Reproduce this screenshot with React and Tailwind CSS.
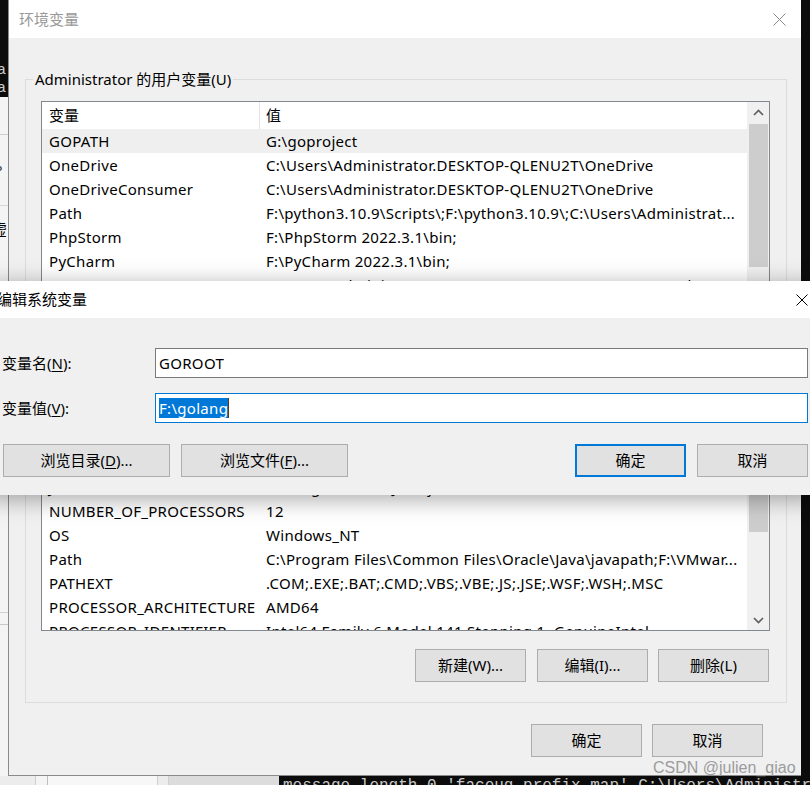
const userRows = [
  ["GOPATH", "G:\\goproject"],
  ["OneDrive", "C:\\Users\\Administrator.DESKTOP-QLENU2T\\OneDrive"],
  ["OneDriveConsumer", "C:\\Users\\Administrator.DESKTOP-QLENU2T\\OneDrive"],
  ["Path", "F:\\python3.10.9\\Scripts\\;F:\\python3.10.9\\;C:\\Users\\Administrat..."],
  ["PhpStorm", "F:\\PhpStorm 2022.3.1\\bin;"],
  ["PyCharm", "F:\\PyCharm 2022.3.1\\bin;"],
  ["TEMP", "C:\\Users\\Administrator.DESKTOP-QLENU2T\\AppData\\Local\\Temp"],
  ["TMP", "C:\\Users\\Administrator.DESKTOP-QLENU2T\\AppData\\Local\\Temp"],
];

const sysRows = [
  ["DriverData", "C:\\Windows\\System32\\Drivers\\DriverData"],
  ["JAVA_HOME", "C:\\Program Files\\Java\\jdk1.8.0_201"],
  ["NUMBER_OF_PROCESSORS", "12"],
  ["OS", "Windows_NT"],
  ["Path", "C:\\Program Files\\Common Files\\Oracle\\Java\\javapath;F:\\VMwar..."],
  ["PATHEXT", ".COM;.EXE;.BAT;.CMD;.VBS;.VBE;.JS;.JSE;.WSF;.WSH;.MSC"],
  ["PROCESSOR_ARCHITECTURE", "AMD64"],
  ["PROCESSOR_IDENTIFIER", "Intel64 Family 6 Model 141 Stepping 1, GenuineIntel"],
];

function XIcon({ className = "", size = 13 }) {
  return (
    <svg width={size} height={size} viewBox={`0 0 ${size} ${size}`} className={className}>
      <path d={`M0.5 0.5L${size - 0.5} ${size - 0.5}M${size - 0.5} 0.5L0.5 ${size - 0.5}`} stroke="currentColor" strokeWidth="1" />
    </svg>
  );
}

function Chevron({ down }) {
  return (
    <svg width="11" height="7" viewBox="0 0 11 7">
      <path d={down ? "M1 1L5.5 5.5L10 1" : "M1 6L5.5 1.5L10 6"} fill="none" stroke="#606060" strokeWidth="1.7" />
    </svg>
  );
}

function Btn({ children, className = "", focus }) {
  return (
    <div
      className={`h-[33px] flex items-center justify-center bg-[#e1e1e1] ${
        focus ? "border-2 border-[#0078d7]" : "border border-[#adadad]"
      } ${className}`}
    >
      {children}
    </div>
  );
}

function Scrollbar({ thumbTop, thumbH }) {
  return (
    <div className="w-[22px] bg-[#f0f0f0] flex flex-col items-center">
      <div className="h-[20px] w-full flex items-center justify-center">
        <Chevron />
      </div>
      <div style={{ height: thumbTop }} />
      <div className="w-[19px] bg-[#cdcdcd]" style={{ height: thumbH }} />
      <div className="flex-1" />
      <div className="h-[20px] w-full flex items-center justify-center">
        <Chevron down />
      </div>
    </div>
  );
}

function VarList({ rows, selected, thumbTop, thumbH }) {
  return (
    <div className="w-[729px] h-[208px] border border-[#828790] bg-white flex">
      <div className="w-[705px] flex flex-col overflow-hidden">
        <div className="h-[27px] flex shrink-0">
          <div className="w-[217px] pl-[7px] flex items-center">变量</div>
          <div className="w-px bg-[#e5e5e5]" />
          <div className="flex-1 pl-[6px] flex items-center">值</div>
        </div>
        {rows.map(([k, v], i) => (
          <div
            key={k + i}
            className={`h-[24px] shrink-0 flex items-center tracking-[0.3px] ${i === selected ? "bg-[#efefef]" : ""}`}
          >
            <div className="w-[218px] pl-[7px] whitespace-nowrap overflow-hidden">{k}</div>
            <div className="flex-1 pl-[6px] whitespace-nowrap overflow-hidden">{v}</div>
          </div>
        ))}
      </div>
      <Scrollbar thumbTop={thumbTop} thumbH={thumbH} />
    </div>
  );
}

function Group({ title, children, className = "" }) {
  return (
    <div className={`relative w-[762px] border border-[#dcdcdc] pl-[15px] pt-[21px] ${className}`}>
      <span className="absolute left-[7px] top-[-11px] px-[2px] bg-[#f0f0f0] leading-[20px]">{title}</span>
      {children}
    </div>
  );
}

function EditDialog() {
  return (
    <div className="absolute left-[-14px] top-[281px] w-[836px] flex flex-col shadow-[0_4px_22px_rgba(0,0,0,0.35)]">
      <div className="h-[37px] bg-white flex items-center justify-between pl-[11px] pr-[14px]">
        <span>编辑系统变量</span>
        <XIcon className="text-black" size={12} />
      </div>
      <div className="bg-[#f0f0f0] pt-[30px] pb-[18px] pr-[14px] flex flex-col">
        <div className="flex items-center">
          <div className="w-[169px] pl-[16px]">
            变量名(<span className="underline underline-offset-2">N</span>):
          </div>
          <div className="flex-1 h-[30px] border border-[#7a7a7a] bg-white flex items-center pl-[3px] tracking-[0.3px]">
            GOROOT
          </div>
        </div>
        <div className="flex items-center mt-[15px]">
          <div className="w-[169px] pl-[16px]">
            变量值(<span className="underline underline-offset-2">V</span>):
          </div>
          <div className="flex-1 h-[30px] border border-[#0078d7] bg-white flex items-center pl-[3px] tracking-[0.3px]">
            <span className="bg-[#0078d7] text-white leading-[20px]">F:\golang</span>
            <span className="w-px h-[20px] bg-[#5a3a10]" />
          </div>
        </div>
        <div className="flex items-center mt-[21px] pl-[17px]">
          <Btn className="w-[167px]">
            浏览目录(<span className="underline underline-offset-2">D</span>)...
          </Btn>
          <Btn className="w-[167px] ml-[11px]">
            浏览文件(<span className="underline underline-offset-2">F</span>)...
          </Btn>
          <Btn focus className="w-[111px] ml-auto">确定</Btn>
          <Btn className="w-[111px] ml-[11px]">取消</Btn>
        </div>
      </div>
    </div>
  );
}

export default function App() {
  return (
    <div className="relative w-[810px] h-[785px] overflow-hidden bg-[#0c0c0c] text-black text-[15px] font-['Noto_Sans','Noto_Sans_CJK_SC',sans-serif]">
      <div className="flex h-[776px]">
        {/* left strip: windows behind */}
        <div className="w-[8px] flex flex-col overflow-hidden">
          <div className="h-[97px] bg-[#0c0c0c] flex flex-col pt-[62px] font-['Liberation_Mono',monospace] text-[15px] leading-[18px] text-[#cccccc]">
            <span className="ml-[-3px]">a</span>
            <span className="ml-[-3px]">a</span>
          </div>
          <div className="flex-1 bg-[#f4f4f4] flex flex-col">
            <div className="h-[38px] border-b border-[#d0d0d0]" />
            <div className="h-[70px] text-[15px] leading-[20px] pt-[26px] ml-[-4px]">°</div>
            <div className="h-[30px] border-t border-[#d8d8d8] pt-[16px] ml-[-8px] leading-[15px]">虚</div>
            <div className="h-[230px]" />
            <div className="h-[8px] border-b border-[#d0d0d0]" />
            <div className="h-[140px] border-b border-[#d0d0d0]" />
            <div className="h-[12px] border-b border-[#c8c8c8]" />
          </div>
        </div>

        {/* environment variables dialog */}
        <div className="w-[793px] h-[776px] border-l border-b border-[#8a8a8a] bg-[#f0f0f0] flex flex-col">
          <div className="h-[38px] shrink-0 bg-white flex items-center justify-between pl-[10px] pr-[15px]">
            <span className="text-[#999999]">环境变量</span>
            <XIcon className="text-[#8a8a8a]" />
          </div>
          <div className="pl-[16px] pt-[41px] flex flex-col">
            <Group title="Administrator 的用户变量(U)" className="pb-[19px]">
              <VarList rows={userRows} selected={0} thumbTop={2} thumbH={143} />
              <div className="w-[729px] flex justify-end gap-[11px] mt-[18px]">
                <Btn className="w-[111px]">新建(N)...</Btn>
                <Btn className="w-[111px]">编辑(E)...</Btn>
                <Btn className="w-[111px]">删除(D)</Btn>
              </div>
            </Group>
            <Group title="系统变量(S)" className="pb-[20px] mt-[21px]">
              <VarList rows={sysRows} selected={-1} thumbTop={16} thumbH={72} />
              <div className="w-[729px] flex justify-end mt-[18px]">
                <Btn className="w-[111px]">新建(W)...</Btn>
                <Btn className="w-[111px] ml-[11px]">编辑(I)...</Btn>
                <Btn className="w-[111px] ml-[10px] mr-[1px]">删除(L)</Btn>
              </div>
            </Group>
            <div className="w-[762px] flex justify-end mt-[21px] pr-[24px]">
              <Btn className="w-[111px]">确定</Btn>
              <Btn className="w-[111px] ml-[10px]">取消</Btn>
            </div>
          </div>
        </div>

        <div className="flex-1 bg-[#0c0c0c]" />
      </div>

      {/* bottom strip: taskbar / terminal behind */}
      <div className="flex h-[9px] overflow-hidden">
        <div className="w-[289px] bg-[#ececec] flex">
          <div className="w-[36px] border-r border-[#cfcfcf]" />
          <div className="w-[12px] border-r border-[#bdbdbd] bg-[#f4f4f4]" />
          <div className="w-[110px] border-r border-[#cfcfcf] bg-[#f7f7f7]" />
          <div className="w-[11px] border-r border-[#cfcfcf]" />
          <div className="w-[110px] bg-[#dcdcdc]" />
        </div>
        <div className="flex-1 pl-[4px] whitespace-nowrap font-['Liberation_Mono',monospace] text-[16px] leading-[20px] text-[#c8c8c8]">
          message length 0 'faceug prefix map' C:\Users\Administrator
        </div>
      </div>

      <EditDialog />

      <div className="absolute left-[653px] top-[758px] font-['Liberation_Sans',sans-serif] text-[16px] leading-[20px] text-[#9c9c9c]">
        CSDN @julien_qiao
      </div>
    </div>
  );
}
